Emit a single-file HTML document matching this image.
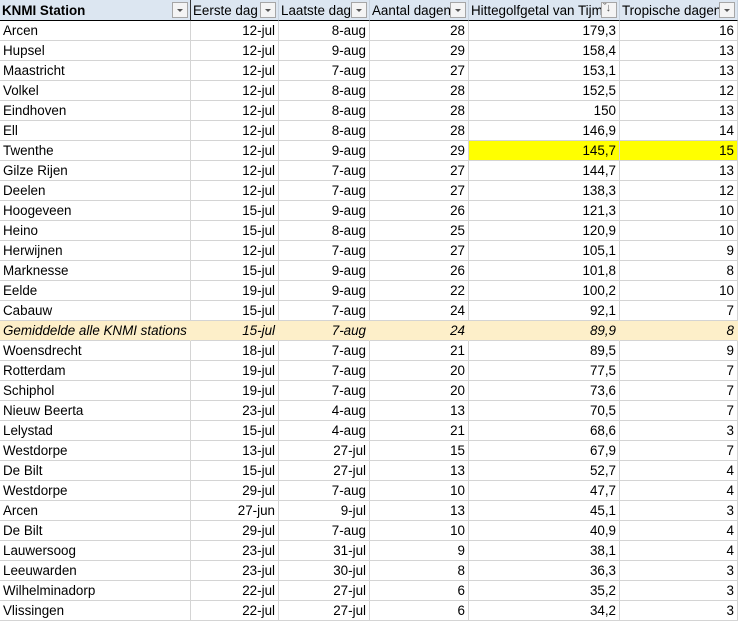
<!DOCTYPE html>
<html><head><meta charset="utf-8"><style>
body{margin:0;background:#fff;width:738px;height:621px;overflow:hidden}
table{width:738px;border-collapse:separate;border-spacing:0;table-layout:fixed;font-family:"Liberation Sans",Arial,sans-serif;font-size:13.4px;color:#000}
td{box-sizing:border-box;height:20px;padding:1px 3px 0 3px;border-right:1px solid #d4d4d4;border-bottom:1px solid #d4d4d4;line-height:18px;white-space:nowrap;overflow:hidden;text-align:right}
td:first-child{text-align:left}
tr.h td{height:21px;background:#dce6f1;border-bottom:1px solid #000;border-right:1px solid #c8d3df;text-align:left;position:relative;line-height:19px;padding-left:2px}
tr.h td:first-child{font-weight:bold;border-right:1px solid #333}
.dd{position:absolute;right:2px;top:2px;width:14px;height:14px;border:1px solid #a6a6a6;background:#f4f4f4}
.dd:after{content:"";position:absolute;left:4px;top:6px;border-left:3px solid transparent;border-right:3px solid transparent;border-top:3px solid #555}
.srt:after{display:none}
.srt span{position:absolute;left:1px;top:-2px;font-size:11px;line-height:14px;color:#555;font-weight:normal;letter-spacing:-1px}
tr.avg td{background:#fdefc9;font-style:italic;border-right-color:#fdefc9;border-bottom-color:#d4d4d4}
.y{background:#ffff00}
</style></head><body>
<table>
<colgroup><col style="width:191px"><col style="width:88px"><col style="width:91px"><col style="width:99px"><col style="width:151px"><col style="width:118px"></colgroup>
<tr class="h"><td>KNMI Station<div class="dd"></div></td><td>Eerste dag<div class="dd"></div></td><td>Laatste dag<div class="dd"></div></td><td>Aantal dagen<div class="dd"></div></td><td>Hittegolfgetal van Tijm<div class="dd srt"><span>&#711;&#8595;</span></div></td><td>Tropische dagen<div class="dd"></div></td></tr>
<tr><td>Arcen</td><td>12-jul</td><td>8-aug</td><td>28</td><td>179,3</td><td>16</td></tr>
<tr><td>Hupsel</td><td>12-jul</td><td>9-aug</td><td>29</td><td>158,4</td><td>13</td></tr>
<tr><td>Maastricht</td><td>12-jul</td><td>7-aug</td><td>27</td><td>153,1</td><td>13</td></tr>
<tr><td>Volkel</td><td>12-jul</td><td>8-aug</td><td>28</td><td>152,5</td><td>12</td></tr>
<tr><td>Eindhoven</td><td>12-jul</td><td>8-aug</td><td>28</td><td>150</td><td>13</td></tr>
<tr><td>Ell</td><td>12-jul</td><td>8-aug</td><td>28</td><td>146,9</td><td>14</td></tr>
<tr><td>Twenthe</td><td>12-jul</td><td>9-aug</td><td>29</td><td class="y">145,7</td><td class="y">15</td></tr>
<tr><td>Gilze Rijen</td><td>12-jul</td><td>7-aug</td><td>27</td><td>144,7</td><td>13</td></tr>
<tr><td>Deelen</td><td>12-jul</td><td>7-aug</td><td>27</td><td>138,3</td><td>12</td></tr>
<tr><td>Hoogeveen</td><td>15-jul</td><td>9-aug</td><td>26</td><td>121,3</td><td>10</td></tr>
<tr><td>Heino</td><td>15-jul</td><td>8-aug</td><td>25</td><td>120,9</td><td>10</td></tr>
<tr><td>Herwijnen</td><td>12-jul</td><td>7-aug</td><td>27</td><td>105,1</td><td>9</td></tr>
<tr><td>Marknesse</td><td>15-jul</td><td>9-aug</td><td>26</td><td>101,8</td><td>8</td></tr>
<tr><td>Eelde</td><td>19-jul</td><td>9-aug</td><td>22</td><td>100,2</td><td>10</td></tr>
<tr><td>Cabauw</td><td>15-jul</td><td>7-aug</td><td>24</td><td>92,1</td><td>7</td></tr>
<tr class="avg"><td>Gemiddelde alle KNMI stations</td><td>15-jul</td><td>7-aug</td><td>24</td><td>89,9</td><td>8</td></tr>
<tr><td>Woensdrecht</td><td>18-jul</td><td>7-aug</td><td>21</td><td>89,5</td><td>9</td></tr>
<tr><td>Rotterdam</td><td>19-jul</td><td>7-aug</td><td>20</td><td>77,5</td><td>7</td></tr>
<tr><td>Schiphol</td><td>19-jul</td><td>7-aug</td><td>20</td><td>73,6</td><td>7</td></tr>
<tr><td>Nieuw Beerta</td><td>23-jul</td><td>4-aug</td><td>13</td><td>70,5</td><td>7</td></tr>
<tr><td>Lelystad</td><td>15-jul</td><td>4-aug</td><td>21</td><td>68,6</td><td>3</td></tr>
<tr><td>Westdorpe</td><td>13-jul</td><td>27-jul</td><td>15</td><td>67,9</td><td>7</td></tr>
<tr><td>De Bilt</td><td>15-jul</td><td>27-jul</td><td>13</td><td>52,7</td><td>4</td></tr>
<tr><td>Westdorpe</td><td>29-jul</td><td>7-aug</td><td>10</td><td>47,7</td><td>4</td></tr>
<tr><td>Arcen</td><td>27-jun</td><td>9-jul</td><td>13</td><td>45,1</td><td>3</td></tr>
<tr><td>De Bilt</td><td>29-jul</td><td>7-aug</td><td>10</td><td>40,9</td><td>4</td></tr>
<tr><td>Lauwersoog</td><td>23-jul</td><td>31-jul</td><td>9</td><td>38,1</td><td>4</td></tr>
<tr><td>Leeuwarden</td><td>23-jul</td><td>30-jul</td><td>8</td><td>36,3</td><td>3</td></tr>
<tr><td>Wilhelminadorp</td><td>22-jul</td><td>27-jul</td><td>6</td><td>35,2</td><td>3</td></tr>
<tr><td>Vlissingen</td><td>22-jul</td><td>27-jul</td><td>6</td><td>34,2</td><td>3</td></tr>
</table>
</body></html>
